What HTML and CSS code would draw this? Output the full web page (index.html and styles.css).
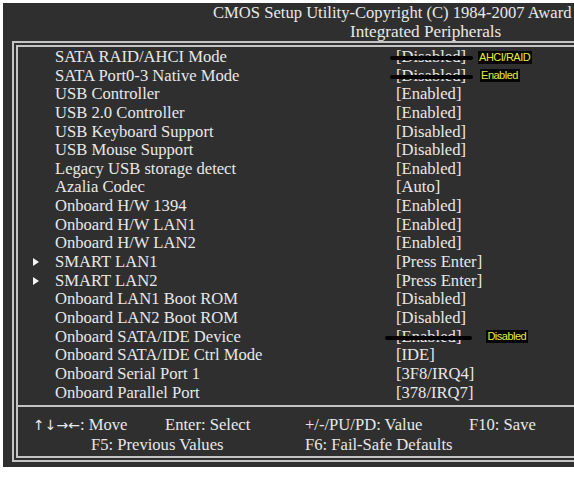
FILE: index.html
```html
<!DOCTYPE html>
<html>
<head>
<meta charset="utf-8">
<link rel="stylesheet" href="styles.css">
</head>
<body>
<div class="screen">
  <div class="title">
    <div class="title-main">CMOS Setup Utility-Copyright (C) 1984-2007 Award</div>
    <div class="title-sub">Integrated Peripherals</div>
  </div>
  <div class="frame">
    <div class="list">
      <div class="row"><span class="mark"></span><span class="label">SATA RAID/AHCI Mode</span><span class="value"><span class="struck">[Disabled]</span><span class="note note-a">AHCI/RAID</span></span></div>
      <div class="row"><span class="mark"></span><span class="label">SATA Port0-3 Native Mode</span><span class="value"><span class="struck">[Disabled]</span><span class="note note-b">Enabled</span></span></div>
      <div class="row"><span class="mark"></span><span class="label">USB Controller</span><span class="value">[Enabled]</span></div>
      <div class="row"><span class="mark"></span><span class="label">USB 2.0 Controller</span><span class="value">[Enabled]</span></div>
      <div class="row"><span class="mark"></span><span class="label">USB Keyboard Support</span><span class="value">[Disabled]</span></div>
      <div class="row"><span class="mark"></span><span class="label">USB Mouse Support</span><span class="value">[Disabled]</span></div>
      <div class="row"><span class="mark"></span><span class="label">Legacy USB storage detect</span><span class="value">[Enabled]</span></div>
      <div class="row"><span class="mark"></span><span class="label">Azalia Codec</span><span class="value">[Auto]</span></div>
      <div class="row"><span class="mark"></span><span class="label">Onboard H/W 1394</span><span class="value">[Enabled]</span></div>
      <div class="row"><span class="mark"></span><span class="label">Onboard H/W LAN1</span><span class="value">[Enabled]</span></div>
      <div class="row"><span class="mark"></span><span class="label">Onboard H/W LAN2</span><span class="value">[Enabled]</span></div>
      <div class="row"><span class="mark"><span class="tri"></span></span><span class="label">SMART LAN1</span><span class="value">[Press Enter]</span></div>
      <div class="row"><span class="mark"><span class="tri"></span></span><span class="label">SMART LAN2</span><span class="value">[Press Enter]</span></div>
      <div class="row"><span class="mark"></span><span class="label">Onboard LAN1 Boot ROM</span><span class="value">[Disabled]</span></div>
      <div class="row"><span class="mark"></span><span class="label">Onboard LAN2 Boot ROM</span><span class="value">[Disabled]</span></div>
      <div class="row"><span class="mark"></span><span class="label">Onboard SATA/IDE Device</span><span class="value"><span class="struck struck-wide">[Enabled]</span><span class="note note-c">Disabled</span></span></div>
      <div class="row"><span class="mark"></span><span class="label">Onboard SATA/IDE Ctrl Mode</span><span class="value">[IDE]</span></div>
      <div class="row"><span class="mark"></span><span class="label">Onboard Serial Port 1</span><span class="value">[3F8/IRQ4]</span></div>
      <div class="row"><span class="mark"></span><span class="label">Onboard Parallel Port</span><span class="value">[378/IRQ7]</span></div>
    </div>
    <div class="footer">
      <span class="k k-move"><span class="arrows">↑↓→←</span>: Move</span>
      <span class="k k-select">Enter: Select</span>
      <span class="k k-value">+/-/PU/PD: Value</span>
      <span class="k k-save">F10: Save</span>
      <span class="k k-prev">F5: Previous Values</span>
      <span class="k k-fail">F6: Fail-Safe Defaults</span>
    </div>
  </div>
</div>
</body>
</html>
```
FILE: styles.css
```css
html, body {
  margin: 0;
  padding: 0;
  background: #ffffff;
}
.screen {
  margin: 3px 0 0 3px;
  width: 571px;
  height: 464px;
  background: #2f2f2f;
  overflow: hidden;
  color: #e8e8e8;
  font-family: "Liberation Serif", "Times New Roman", serif;
  font-size: 16.6px;
}
.title {
  padding-left: 210px;
  line-height: 19px;
  white-space: nowrap;
}
.title-sub {
  padding-left: 137px;
  font-size: 17.2px;
}
.frame {
  margin-left: 9px;
  width: 640px;
  border: 6px double #c4c4c4;
}
.list {
  padding-top: 1px;
  padding-bottom: 3px;
}
.row {
  display: grid;
  grid-template-columns: 37px 341px auto;
  line-height: 18.65px;
  height: 18.65px;
  white-space: nowrap;
}
.mark {
  display: flex;
  align-items: center;
  padding-left: 15px;
}
.tri {
  width: 0;
  height: 0;
  border-top: 4px solid transparent;
  border-bottom: 4px solid transparent;
  border-left: 6px solid #f4f4f4;
}
.value {
  display: flex;
  align-items: center;
}
.struck {
  position: relative;
}
.struck::after {
  content: "";
  position: absolute;
  left: -6px;
  right: -7px;
  top: 8px;
  height: 4px;
  border-radius: 2px;
  background: #000;
}
.struck-wide::after {
  left: -11px;
  right: -11px;
}
.note {
  font-family: "Liberation Sans", Arial, sans-serif;
  font-size: 11px;
  line-height: 13px;
  letter-spacing: -0.5px;
  color: #e4ee3c;
  background: #050505;
  padding: 0 2px 0 1px;
}
.note-a { margin-left: 12px; }
.note-b { margin-left: 14px; }
.note-c { margin-left: 25px; }
.footer {
  border-top: 2px solid #c4c4c4;
  display: grid;
  grid-template-columns: 15px 58px 74px 140px 164px auto;
  line-height: 19px;
  padding-top: 8px;
  padding-bottom: 2px;
  white-space: nowrap;
}
.arrows {
  font-family: "DejaVu Sans", sans-serif;
  font-size: 14px;
}
.k-move { grid-column: 2 / 4; grid-row: 1; }
.k-select { grid-column: 4; grid-row: 1; }
.k-value { grid-column: 5; grid-row: 1; }
.k-save { grid-column: 6; grid-row: 1; }
.k-prev { grid-column: 3 / 5; grid-row: 2; }
.k-fail { grid-column: 5 / 7; grid-row: 2; }
```
